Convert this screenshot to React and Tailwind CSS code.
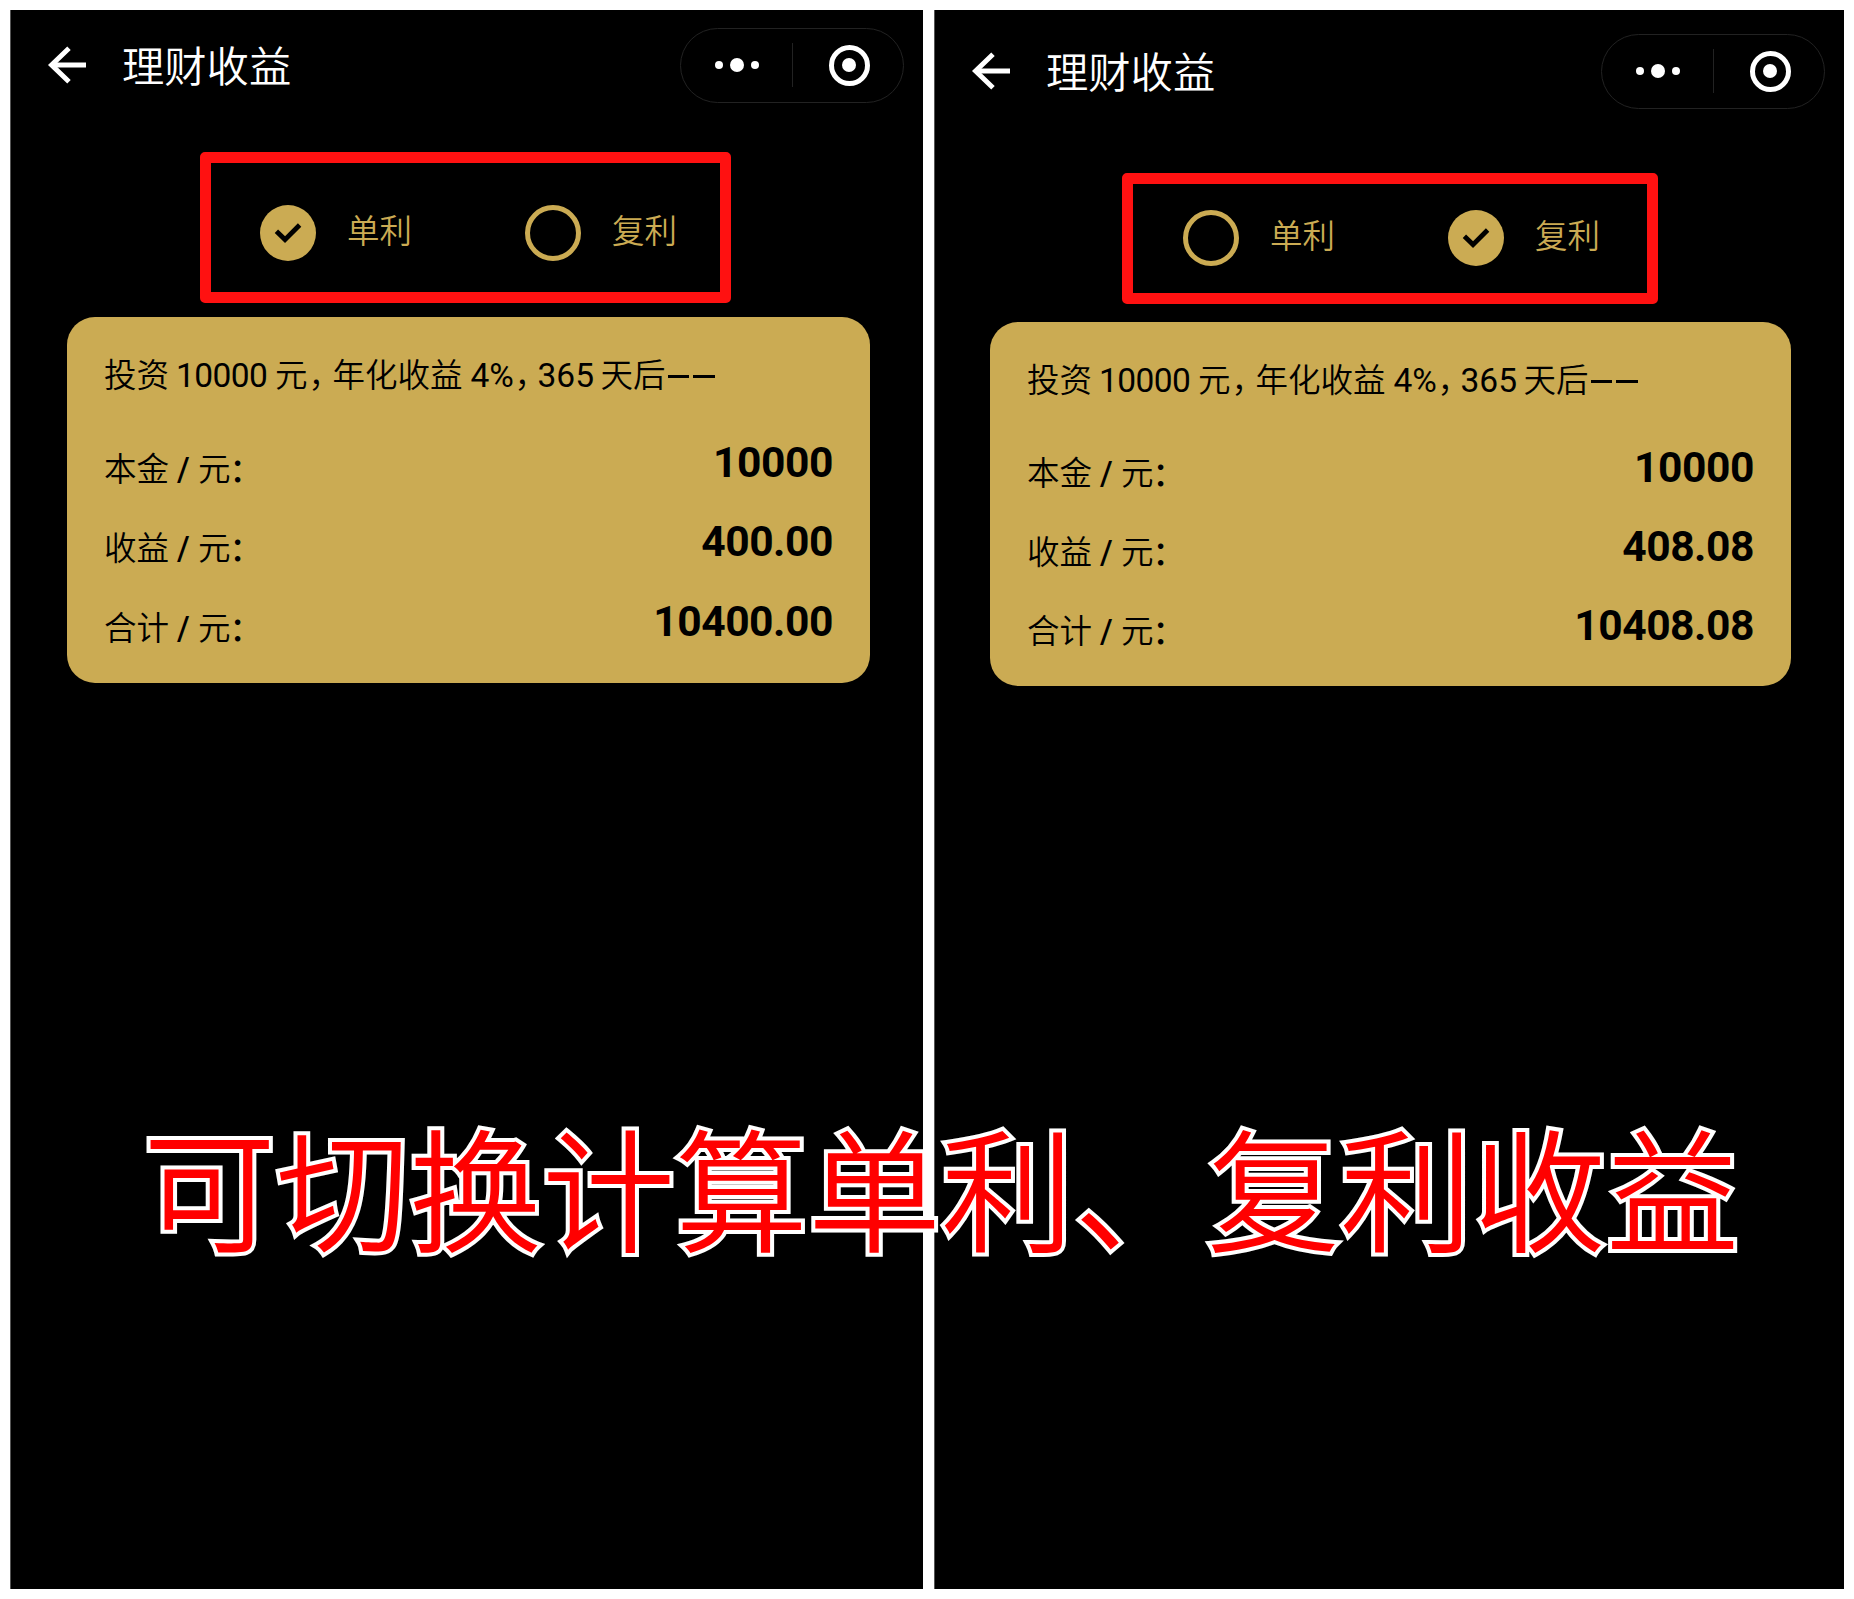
function BackArrow() {
  return (
    <svg width="40" height="40" viewBox="0 0 40 40" className="block shrink-0" fill="none" stroke="#fff" strokeWidth="5">
      <path d="M22 3.3 L4.6 20 L22 36.7" />
      <path d="M5 20 H39" />
    </svg>
  );
}

function Capsule() {
  return (
    <div className="flex h-[75px] w-[224px] shrink-0 items-center rounded-full border border-[#222]">
      <div className="flex w-[111px] items-center justify-center gap-[7px]">
        <span className="h-2 w-2 rounded-full bg-white" />
        <span className="h-[14px] w-[14px] rounded-full bg-white" />
        <span className="h-2 w-2 rounded-full bg-white" />
      </div>
      <div className="h-[44px] w-px bg-[#222]" />
      <div className="flex flex-1 items-center justify-center pl-[2px]">
        <div className="flex h-[41px] w-[41px] items-center justify-center rounded-full border-5 border-white">
          <span className="h-[14px] w-[14px] rounded-full bg-white" />
        </div>
      </div>
    </div>
  );
}

function Radio({ checked, label }) {
  return (
    <div className="flex h-[56px] w-[265px] items-center">
      {checked ? (
        <svg width="56" height="56" viewBox="0 0 56 56" className="block shrink-0">
          <circle cx="28" cy="28" r="28" fill="#cbab53" />
          <path d="M16.4 26.3 L25 34.6 L39.6 20" fill="none" stroke="#000" strokeWidth="4.8" />
        </svg>
      ) : (
        <div className="h-[56px] w-[56px] shrink-0 rounded-full border-5 border-[#cbab53]" />
      )}
      <span className="-mt-[1px] ml-[31px] text-[32.5px] font-[350] leading-none text-[#cbab53]">{label}</span>
    </div>
  );
}

function Row({ label, value, height, labelTop }) {
  return (
    <div className={`flex items-start justify-between ${height}`}>
      <div className={`flex text-[32.5px] font-[350] leading-[40px] ${labelTop}`}>
        <span className="w-[73px]">{label}</span>
        <span className="w-[21px] font-medium">/</span>
        <span>元</span>
        <span className="-ml-px w-[20px] pt-[1px] font-medium [font-feature-settings:'halt']">：</span>
      </div>
      <div className="text-[42.6px] font-bold leading-[50px] tracking-[-0.45px]">{value}</div>
    </div>
  );
}

function Phone({ p }) {
  return (
    <section className={`relative h-[1579px] border-l border-[#555] bg-black ${p.width}`}>
      <header className={`flex items-center pr-[19px] ${p.header}`}>
        <BackArrow />
        <h1 className="ml-[35px] flex-1 pt-[6px] text-[42.3px] font-[350] leading-none text-white">理财收益</h1>
        <Capsule />
      </header>
      <div className={`flex ${p.radios}`}>
        <Radio checked={p.mode === 'simple'} label="单利" />
        <Radio checked={p.mode === 'compound'} label="复利" />
      </div>
      <div className={`rounded-[28px] bg-[#cbab53] px-[37px] text-black ${p.card}`}>
        <div className="flex whitespace-nowrap pt-[39px] text-[32.5px] font-[350] leading-[40px]">
          <span className="w-[72px]">投资</span>
          <span className="w-[99px] text-[33.5px] font-normal tracking-[-0.6px]">10000</span>
          <span>元</span>
          <span className="w-[25px] pl-px [font-feature-settings:'halt']">，</span>
          <span className="w-[138px]">年化收益</span>
          <span className="w-[43px] text-[33.5px] font-normal">4%</span>
          <span className="w-[24px] pl-px [font-feature-settings:'halt']">，</span>
          <span className="w-[63px] text-[33.5px] font-normal">365</span>
          <span>天后</span>
          <span className="flex items-center gap-[4px] pl-[2px] pt-[1px]">
            <i className="h-[2.5px] w-[21.5px] bg-black" />
            <i className="h-[2.5px] w-[21.5px] bg-black" />
          </span>
        </div>
        <div className={p.rowsTop}>
          {p.rows.map(([label, value]) => (
            <Row key={label} label={label} value={value} height={p.rowHeight} labelTop={p.labelTop} />
          ))}
        </div>
      </div>
      <div className={`absolute rounded-[5px] border-[11px] border-[#ff1111] ${p.mark}`} />
    </section>
  );
}

const phones = [
  {
    mode: 'simple',
    width: 'w-[913px]',
    header: 'h-[110px] pl-[36px]',
    radios: 'pl-[249px] pt-[85px]',
    card: 'ml-[56px] mt-[56px] h-[366px] w-[803px]',
    mark: 'left-[189px] top-[142px] h-[151px] w-[531px]',
    rowsTop: 'pt-[41px]',
    labelTop: 'pt-[13px]',
    rowHeight: 'h-[79.3px]',
    rows: [['本金', '10000'], ['收益', '400.00'], ['合计', '10400.00']],
  },
  {
    mode: 'compound',
    width: 'w-[910px]',
    header: 'h-[122px] pl-[36px]',
    radios: 'pl-[248px] pt-[78px]',
    card: 'ml-[55px] mt-[56px] h-[364px] w-[801px]',
    mark: 'left-[187px] top-[163px] h-[131px] w-[536px]',
    rowsTop: 'pt-[41px]',
    labelTop: 'pt-[12px]',
    rowHeight: 'h-[79px]',
    rows: [['本金', '10000'], ['收益', '408.08'], ['合计', '10408.08']],
  },
];

export default function App() {
  return (
    <main className="relative flex h-[1599px] w-[1854px] gap-[11px] overflow-hidden bg-white p-[10px] font-['Roboto','Noto_Sans_CJK_SC',sans-serif]">
      {phones.map((p) => (
        <Phone key={p.mode} p={p} />
      ))}
      <div className="absolute left-[143px] top-[1109px] whitespace-nowrap font-['Noto_Sans_CJK_SC',sans-serif] text-[133px] font-[350] leading-[150px] text-[#ff0000] [-webkit-text-stroke:8px_#fff] [paint-order:stroke_fill] [stroke-linejoin:round]">
        可切换计算单利、复利收益
      </div>
    </main>
  );
}
